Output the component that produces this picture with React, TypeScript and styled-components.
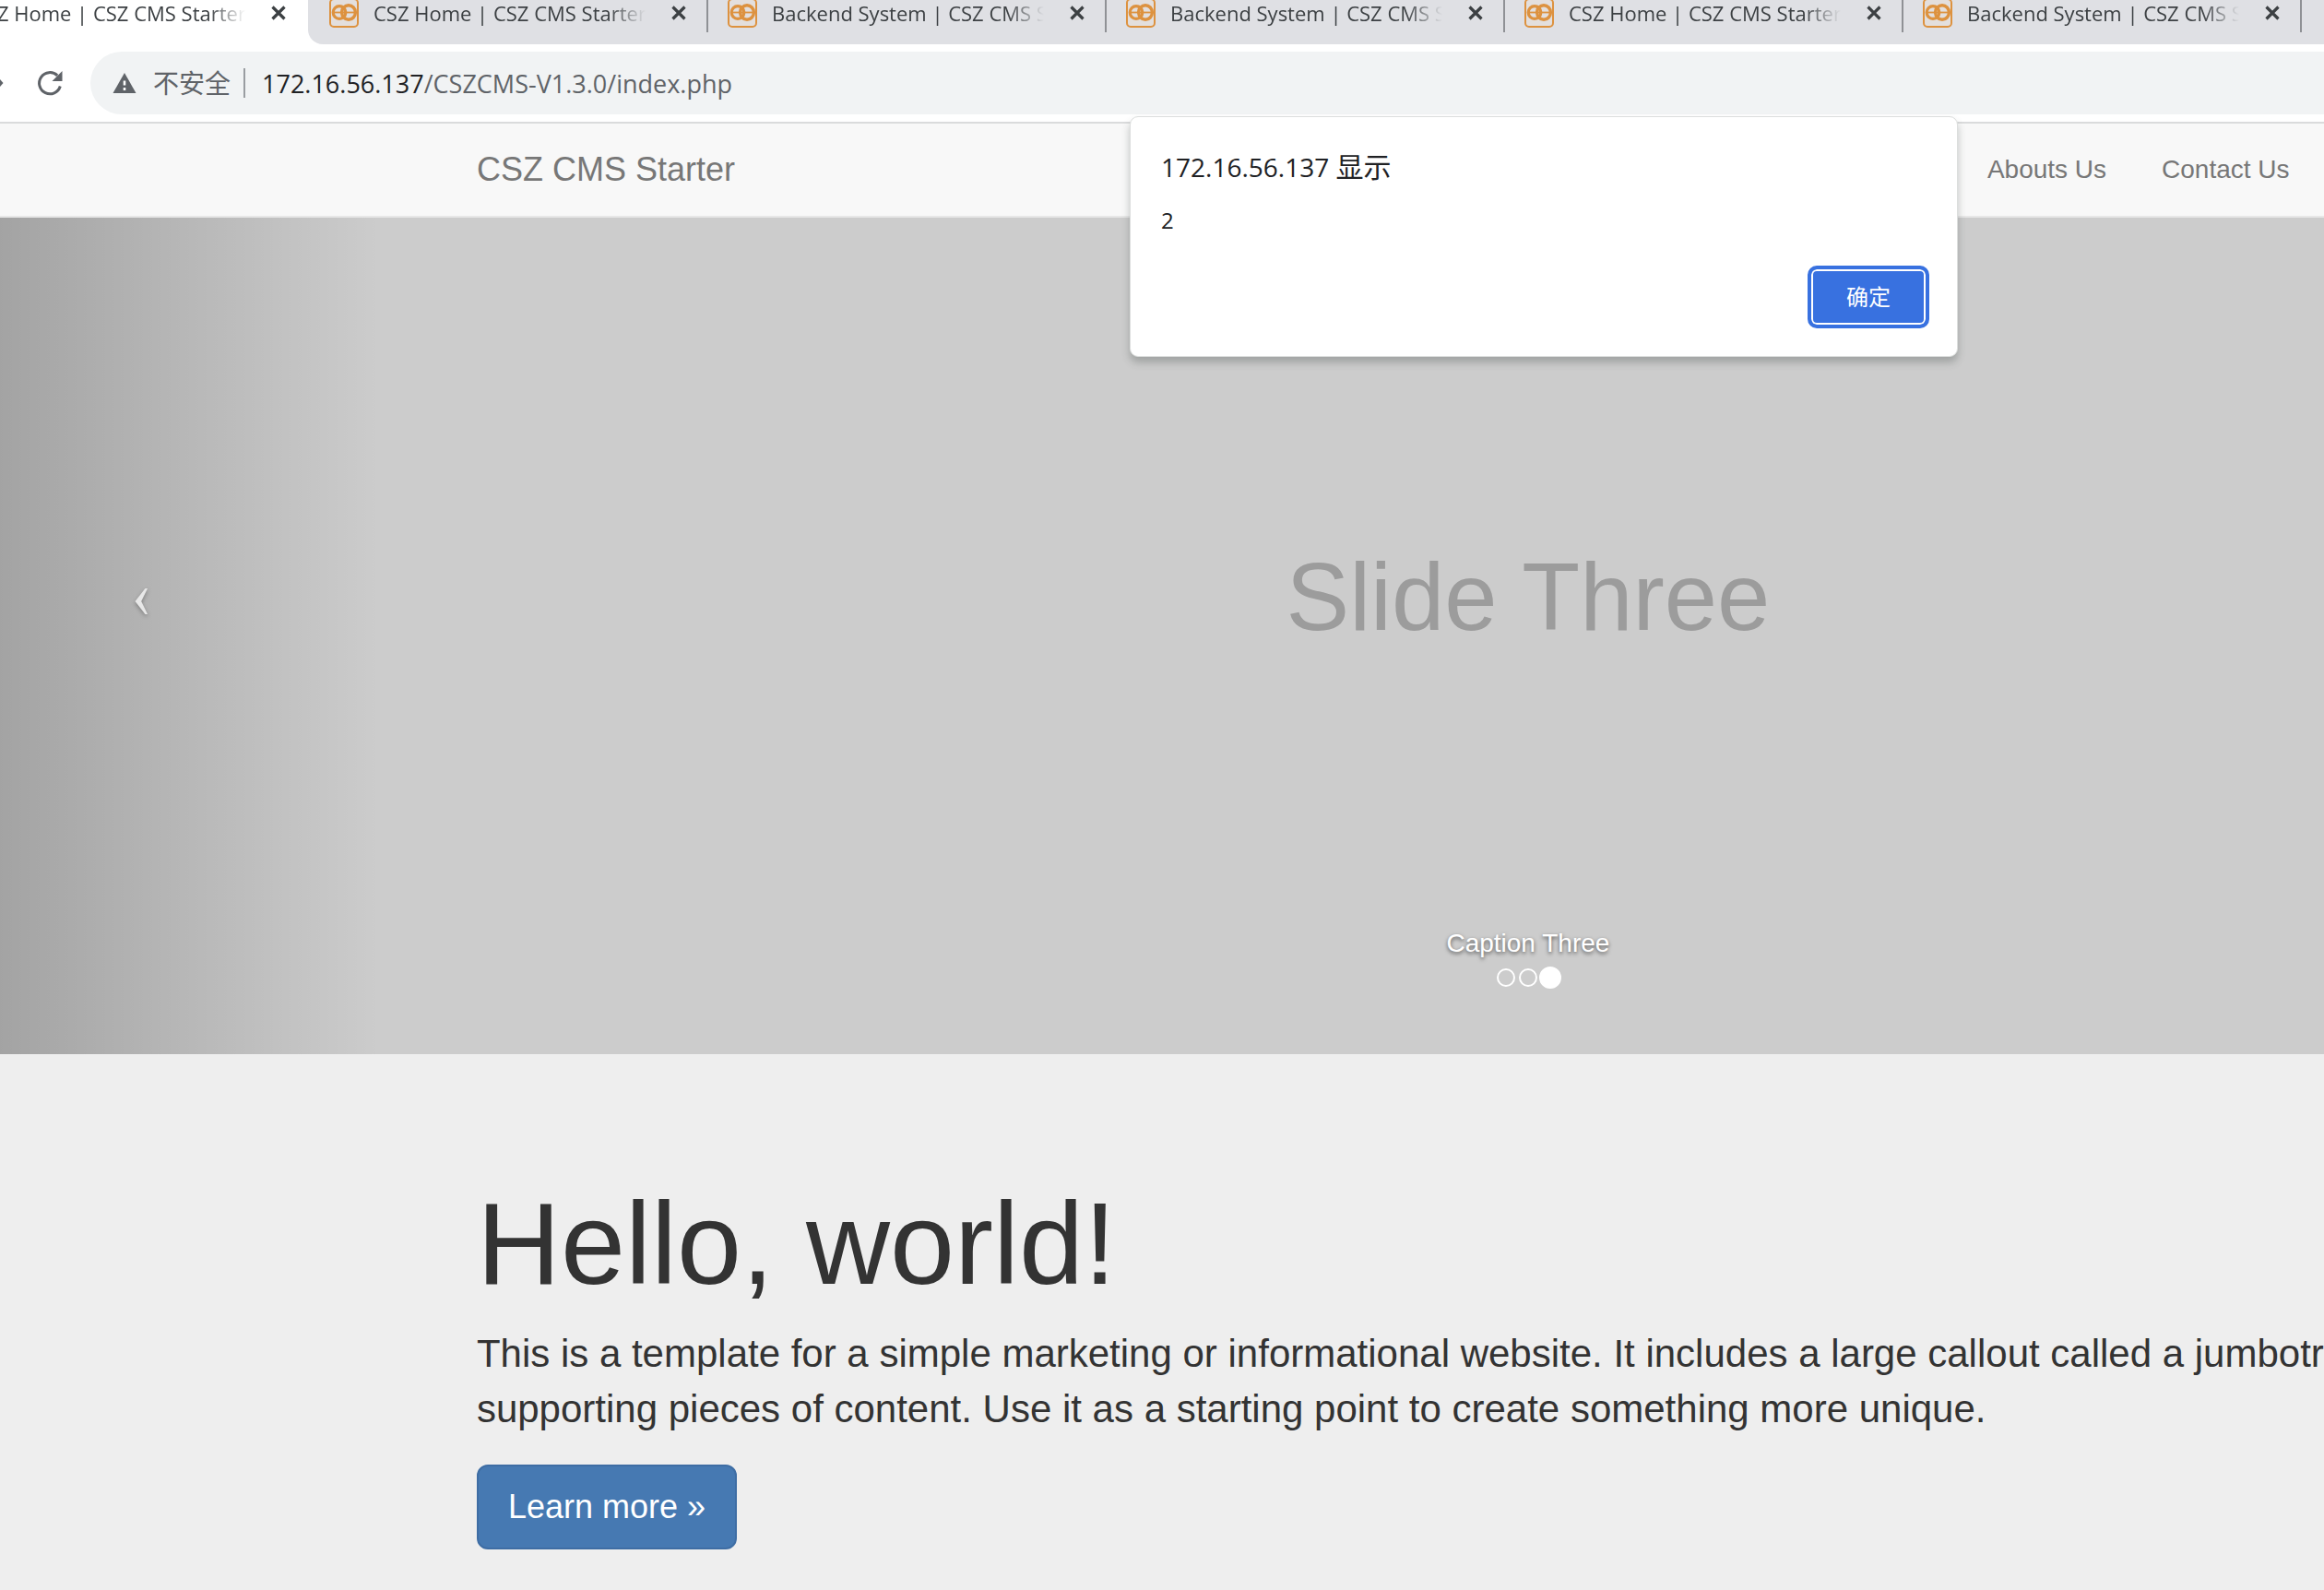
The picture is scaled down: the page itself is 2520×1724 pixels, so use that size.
import React from "react";
import styled, { createGlobalStyle } from "styled-components";

const uiFont = `"Open Sans", "Noto Sans CJK SC", sans-serif`;
const pageFont = `"Liberation Sans", Arial, sans-serif`;

const GlobalStyle = createGlobalStyle`
  * { box-sizing: border-box; }
  html, body { margin: 0; }
  body { background: #eee; overflow: hidden; }
`;

const Browser = styled.div`
  position: relative;
  min-height: 100vh;
  overflow: hidden;
  font-family: ${pageFont};
  color: #333;
`;

/* ---------- tab strip ---------- */

const TabStrip = styled.div`
  display: flex;
  height: 48px;
  margin-left: -98px;
  background: #fff;
  font-family: ${uiFont};
`;

const InactiveTabs = styled.div`
  display: flex;
  flex: 1;
  padding-left: 2px;
  background: #dfe0e4;
  border-bottom-left-radius: 16px;
`;

const Tab = styled.div`
  display: flex;
  flex: none;
  align-items: center;
  gap: 16px;
  width: 432px;
  height: 28px;
  padding: 0 24px 0 21px;
`;

const TabDivider = styled.span`
  flex: none;
  width: 2px;
  height: 35px;
  margin-left: -2px;
  background: #8f9195;
`;

const TabTitle = styled.span`
  flex: 1;
  overflow: hidden;
  font-size: 22px;
  line-height: 32px;
  color: #3c4043;
  white-space: nowrap;
  mask-image: linear-gradient(to right, #000 calc(100% - 52px), transparent calc(100% - 12px));
`;

const IconButton = styled.button`
  display: flex;
  flex: none;
  padding: 0;
  border: 0;
  background: none;
  color: #3c4043;
`;

/* ---------- toolbar ---------- */

const Toolbar = styled.div`
  display: flex;
  align-items: center;
  height: 86px;
  background: #fff;
  border-bottom: 2px solid #dadbdc;
  font-family: ${uiFont};
`;

const NavButtons = styled.div`
  display: flex;
  flex: none;
  justify-content: space-between;
  align-items: center;
  width: 98px;
  padding-right: 29px;
`;

const Omnibox = styled.div`
  display: flex;
  flex: 1;
  align-items: center;
  height: 68px;
  padding-left: 24px;
  background: #f1f3f4;
  border-radius: 34px 0 0 34px;
  font-size: 27px;
  color: #5f6368;
  white-space: nowrap;
`;

const Security = styled.span`
  padding: 0 14px 0 18px;
  font-size: 28px;
  line-height: 40px;
`;

const Separator = styled.span`
  width: 2px;
  height: 32px;
  margin-right: 18px;
  background: #9a9da1;
`;

const Host = styled.span`
  color: #202124;
`;

/* ---------- web page ---------- */

const Page = styled.div`
  width: 131.5%;
`;

const Container = styled.div`
  width: 100%;
  max-width: 2280px;
  margin: 0 auto;
`;

const Navbar = styled.nav`
  background: #f8f8f8;
  border-bottom: 2px solid #e7e7e7;
`;

const NavbarRow = styled(Container)`
  display: flex;
  align-items: center;
  height: 100px;
`;

const Brand = styled.a`
  flex: none;
  width: 1608px;
  font-size: 36px;
  line-height: 40px;
  color: #777;
  text-decoration: none;
`;

const NavLink = styled.a`
  padding: 30px;
  font-size: 28px;
  line-height: 40px;
  color: #777;
  text-decoration: none;
`;

const Carousel = styled.section`
  position: relative;
  display: flex;
  flex-direction: column;
  justify-content: flex-end;
  align-items: center;
  height: 907px;
  padding-bottom: 71px;
  background: #ccc;
`;

const SlideTitle = styled.div`
  display: flex;
  flex: 1;
  align-items: flex-end;
  padding-bottom: 295px;
  font-size: 103px;
  line-height: 120px;
  color: #9c9c9c;
`;

const Caption = styled.p`
  margin: 0;
  font-size: 28px;
  line-height: 40px;
  color: #fff;
  text-shadow: 0 2px 4px rgba(0, 0, 0, 0.6);
`;

const Indicators = styled.div`
  display: flex;
  padding-top: 5px;
`;

const Indicator = styled.button<{ $active?: boolean }>`
  width: ${(p) => (p.$active ? 24 : 20)}px;
  height: ${(p) => (p.$active ? 24 : 20)}px;
  margin: ${(p) => (p.$active ? 0 : 2)}px;
  padding: 0;
  border: 2px solid #fff;
  border-radius: 50%;
  background: ${(p) => (p.$active ? "#fff" : "transparent")};
`;

const PreviousSlide = styled.button`
  position: absolute;
  top: 0;
  bottom: 0;
  left: 0;
  display: flex;
  align-items: center;
  width: 15%;
  padding: 0 0 76px 144px;
  border: 0;
  background: linear-gradient(to right, rgba(0, 0, 0, 0.2) 0%, rgba(0, 0, 0, 0) 83%);

  svg {
    filter: drop-shadow(0 2px 2px rgba(0, 0, 0, 0.3));
  }
`;

const Jumbotron = styled.main`
  padding: 136px 0 96px;
  background: #eee;
`;

const Heading = styled.h1`
  margin: 0 0 20px;
  font-size: 126px;
  font-weight: 400;
  line-height: 139px;
`;

const Lead = styled.p`
  margin: 0 0 30px;
  font-size: 42px;
  line-height: 60px;
`;

const LearnMore = styled.a`
  display: inline-block;
  padding: 20px 32px;
  border: 2px solid #3e6da4;
  border-radius: 12px;
  background: #4679b2;
  font-size: 36px;
  line-height: 48px;
  color: #fff;
  text-decoration: none;
`;

/* ---------- alert ---------- */

const Alert = styled.div`
  position: absolute;
  top: 126px;
  left: 1225px;
  display: flex;
  flex-direction: column;
  width: 898px;
  padding: 34px 30px 30px 33px;
  border: 1px solid #dcdedd;
  border-radius: 9px;
  background: #fff;
  box-shadow: 0 6px 8px rgba(60, 70, 65, 0.3);
  font-family: ${uiFont};
  color: #202124;
`;

const AlertTitle = styled.h2`
  margin: 0 0 22px;
  font-size: 28px;
  font-weight: 400;
  line-height: 40px;
`;

const Says = styled.span`
  font-size: 30px;
`;

const AlertMessage = styled.p`
  margin: 0 0 33px;
  font-size: 24px;
  line-height: 32px;
`;

const ConfirmButton = styled.button`
  align-self: flex-end;
  width: 132px;
  height: 68px;
  padding: 0 0 4px;
  border: 4px solid #3871e0;
  border-radius: 10px;
  background: #3871e0;
  box-shadow: inset 0 0 0 2px #fff;
  font-family: ${uiFont};
  font-size: 24px;
  font-weight: 400;
  color: #fff;
`;

/* ---------- icons ---------- */

const FaviconDrawing = styled.svg`
  flex: none;
`;

const Favicon = () => (
  <FaviconDrawing width="32" height="32" viewBox="0 0 32 32" fill="none" stroke="#dd923f">
    <rect x="1" y="1" width="30" height="30" rx="4" strokeWidth="2" fill="#e3dfdd" />
    <ellipse cx="11" cy="15.5" rx="6.8" ry="6.8" strokeWidth="3.2" />
    <ellipse cx="21" cy="15.5" rx="7.4" ry="7.8" strokeWidth="3.4" />
    <path d="M4 15.5H28" strokeWidth="1.8" />
  </FaviconDrawing>
);

const CloseIcon = () => (
  <svg width="16" height="16" viewBox="0 0 16 16" stroke="currentColor" strokeWidth="3.2">
    <path d="M1.5 1.5L14.5 14.5M14.5 1.5L1.5 14.5" />
  </svg>
);

const ForwardIcon = () => (
  <svg width="4" height="8" viewBox="0 0 4 8" fill="#5f6368">
    <path d="M0 0L3.5 4L0 8Z" />
  </svg>
);

const ReloadIcon = () => (
  <svg width="30" height="30" viewBox="0 0 30 30">
    <path d="M26.3 18.5A11.6 11.6 0 1 1 23.2 6.8" fill="none" stroke="#5f6368" strokeWidth="3" />
    <path d="M28.5 2V13H17.5Z" fill="#5f6368" />
  </svg>
);

const WarningIcon = () => (
  <svg width="26" height="22" viewBox="0 0 26 22">
    <path d="M13 0L25.5 22H0.5Z" fill="#5f6368" />
    <path d="M11.7 8.5H14.3V13.5H11.7ZM11.7 16H14.3V19H11.7Z" fill="#fff" />
  </svg>
);

const ChevronIcon = () => (
  <svg width="20" height="32" viewBox="0 0 20 32" fill="#e8e8e8">
    <path d="M13.5 2H16L9.2 16L16 30H13.5L2.5 16Z" />
  </svg>
);

const homeTitle = "CSZ Home | CSZ CMS Starter";
const backendTitle = "Backend System | CSZ CMS Starter";
const backgroundTabs = [homeTitle, backendTitle, backendTitle, homeTitle, backendTitle];

const TabItem = ({ title }: { title: string }) => (
  <Tab>
    <Favicon />
    <TabTitle>{title}</TabTitle>
    <IconButton aria-label="Close tab">
      <CloseIcon />
    </IconButton>
  </Tab>
);

export default function App() {
  return (
    <Browser>
      <GlobalStyle />
      <TabStrip>
        <TabItem title={homeTitle} />
        <InactiveTabs>
          {backgroundTabs.map((title, i) => (
            <React.Fragment key={i}>
              <TabItem title={title} />
              <TabDivider />
            </React.Fragment>
          ))}
        </InactiveTabs>
      </TabStrip>
      <Toolbar>
        <NavButtons>
          <IconButton aria-label="Forward">
            <ForwardIcon />
          </IconButton>
          <IconButton aria-label="Reload">
            <ReloadIcon />
          </IconButton>
        </NavButtons>
        <Omnibox>
          <WarningIcon />
          <Security>不安全</Security>
          <Separator />
          <Host>172.16.56.137</Host>
          <span>/CSZCMS-V1.3.0/index.php</span>
        </Omnibox>
      </Toolbar>
      <Page>
        <Navbar>
          <NavbarRow>
            <Brand href="#">CSZ CMS Starter</Brand>
            <NavLink href="#about">Abouts Us</NavLink>
            <NavLink href="#contact">Contact Us</NavLink>
          </NavbarRow>
        </Navbar>
        <Carousel>
          <SlideTitle>Slide Three</SlideTitle>
          <Caption>Caption Three</Caption>
          <Indicators>
            <Indicator aria-label="Slide 1" />
            <Indicator aria-label="Slide 2" />
            <Indicator aria-label="Slide 3" $active />
          </Indicators>
          <PreviousSlide aria-label="Previous">
            <ChevronIcon />
          </PreviousSlide>
        </Carousel>
        <Jumbotron>
          <Container>
            <Heading>Hello, world!</Heading>
            <Lead>
              This is a template for a simple marketing or informational website. It includes a large callout called a
              jumbotron and three supporting pieces of content. Use it as a starting point to create something more
              unique.
            </Lead>
            <LearnMore href="#more">Learn more »</LearnMore>
          </Container>
        </Jumbotron>
      </Page>
      <Alert role="alertdialog" aria-labelledby="alert-title">
        <AlertTitle id="alert-title">
          172.16.56.137 <Says>显示</Says>
        </AlertTitle>
        <AlertMessage>2</AlertMessage>
        <ConfirmButton>确定</ConfirmButton>
      </Alert>
    </Browser>
  );
}
